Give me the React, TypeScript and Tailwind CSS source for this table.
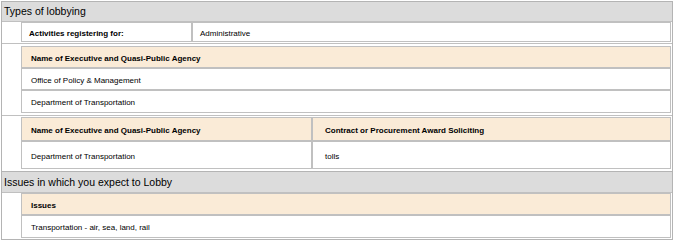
const line = "border border-[#c0c0c0]";

function Cell({
  children,
  bold = false,
  className = "",
}: {
  children?: React.ReactNode;
  bold?: boolean;
  className?: string;
}) {
  return (
    <div
      className={`${line} flex items-center pt-[3px] text-[8px] leading-none ${bold ? "font-bold" : ""} ${className}`}
    >
      {children}
    </div>
  );
}

function SectionHeader({ title, className = "" }: { title: string; className?: string }) {
  return (
    <div
      className={`flex items-center bg-[#dcdcdc] border-b border-[#c0c0c0] pl-[2px] text-[10.5px] leading-none ${className}`}
    >
      {title}
    </div>
  );
}

export default function App() {
  return (
    <div className="w-[674px] h-[240px] bg-white pt-px font-['Liberation_Sans',Arial,sans-serif] text-black overflow-hidden">
      {/* Types of lobbying */}
      <div className="ml-px w-[672px] border border-[#b4b4b4]">
        <SectionHeader title="Types of lobbying" className="h-[20px]" />

        <div className="flex pl-[19px] pr-px pb-px border-b border-[#c0c0c0]">
          <div className="flex flex-1 h-[20px]">
            <Cell bold className="w-[171px] pl-[7px]">
              Activities registering for:
            </Cell>
            <Cell className="flex-1 pl-[7px]">Administrative</Cell>
          </div>
        </div>

        <div className="flex pl-[19px] pr-px pt-[2px] pb-[2px] border-b border-[#c0c0c0]">
          <div className="flex flex-col flex-1">
            <Cell bold className="h-[22px] pl-[9px] bg-[#faebd7]">
              Name of Executive and Quasi-Public Agency
            </Cell>
            <Cell className="h-[22px] pl-[9px]">Office of Policy &amp; Management</Cell>
            <Cell className="h-[23px] pl-[9px]">Department of Transportation</Cell>
          </div>
        </div>

        <div className="flex pl-[19px] pr-px pt-px pb-[2px]">
          <div className="flex flex-col flex-1">
            <div className="flex h-[24px] bg-[#faebd7]">
              <Cell bold className="w-[291px] pl-[9px]">
                Name of Executive and Quasi-Public Agency
              </Cell>
              <Cell bold className="flex-1 pl-[12px]">
                Contract or Procurement Award Soliciting
              </Cell>
            </div>
            <div className="flex h-[28px]">
              <Cell className="w-[291px] pl-[9px]">Department of Transportation</Cell>
              <Cell className="flex-1 pl-[12px]">tolls</Cell>
            </div>
          </div>
        </div>
      </div>

      {/* Issues */}
      <div className="ml-px w-[672px] border-x border-b border-[#b4b4b4]">
        <SectionHeader title="Issues in which you expect to Lobby" className="h-[21px]" />
        <div className="flex pl-[19px] pr-px pb-px">
          <div className="flex flex-col flex-1">
            <Cell bold className="h-[22px] pl-[9px] bg-[#faebd7]">
              Issues
            </Cell>
            <Cell className="h-[23px] pl-[9px]">Transportation - air, sea, land, rail</Cell>
          </div>
        </div>
      </div>
    </div>
  );
}
